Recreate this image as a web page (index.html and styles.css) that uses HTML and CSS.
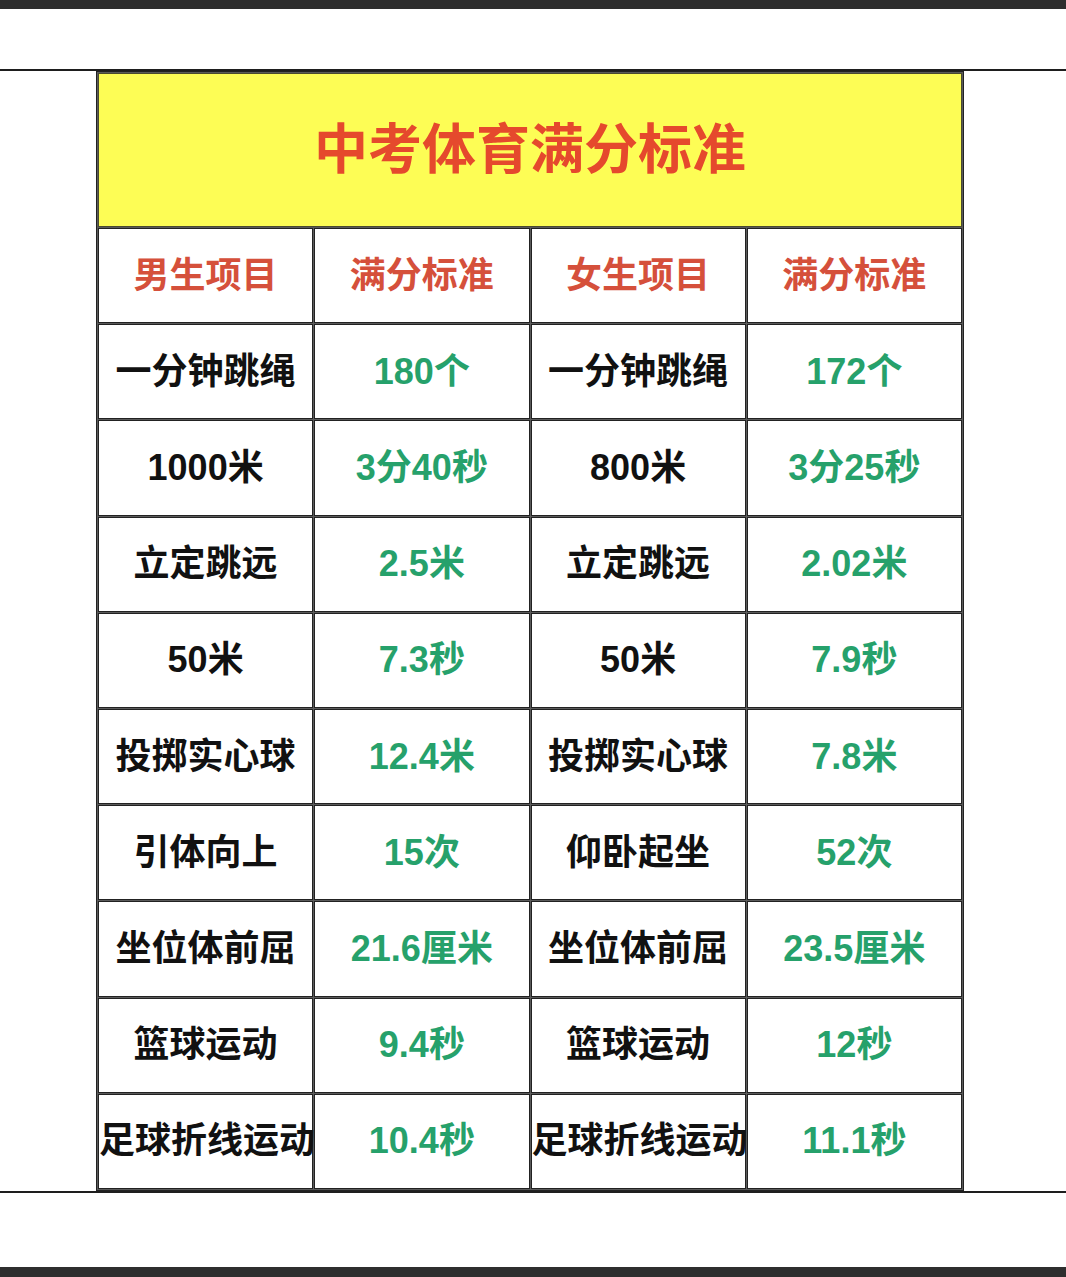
FILE: index.html
```html
<!DOCTYPE html>
<html lang="zh-CN">
<head>
<meta charset="utf-8">
<title>中考体育满分标准</title>
<link rel="stylesheet" href="styles.css">
</head>
<body>
<div class="topbar"></div>
<div class="gap-top"></div>
<div class="frame">
  <table class="score">
    <tr><td class="title" colspan="4">中考体育满分标准</td></tr>
    <tr class="row">
      <td class="head">男生项目</td><td class="head">满分标准</td><td class="head">女生项目</td><td class="head">满分标准</td>
    </tr>
    <tr class="row"><td class="item">一分钟跳绳</td><td class="val">180个</td><td class="item">一分钟跳绳</td><td class="val">172个</td></tr>
    <tr class="row"><td class="item">1000米</td><td class="val">3分40秒</td><td class="item">800米</td><td class="val">3分25秒</td></tr>
    <tr class="row"><td class="item">立定跳远</td><td class="val">2.5米</td><td class="item">立定跳远</td><td class="val">2.02米</td></tr>
    <tr class="row"><td class="item">50米</td><td class="val">7.3秒</td><td class="item">50米</td><td class="val">7.9秒</td></tr>
    <tr class="row"><td class="item">投掷实心球</td><td class="val">12.4米</td><td class="item">投掷实心球</td><td class="val">7.8米</td></tr>
    <tr class="row"><td class="item">引体向上</td><td class="val">15次</td><td class="item">仰卧起坐</td><td class="val">52次</td></tr>
    <tr class="row"><td class="item">坐位体前屈</td><td class="val">21.6厘米</td><td class="item">坐位体前屈</td><td class="val">23.5厘米</td></tr>
    <tr class="row"><td class="item">篮球运动</td><td class="val">9.4秒</td><td class="item">篮球运动</td><td class="val">12秒</td></tr>
    <tr class="row"><td class="item">足球折线运动</td><td class="val">10.4秒</td><td class="item">足球折线运动</td><td class="val">11.1秒</td></tr>
  </table>
</div>
<div class="gap-bottom"></div>
<div class="bottombar"></div>
</body>
</html>
```
FILE: styles.css
```css
html, body {
  margin: 0;
  padding: 0;
  background: #ffffff;
}
body {
  font-family: "Liberation Sans", "Noto Sans CJK SC", sans-serif;
  font-weight: bold;
}
.topbar {
  height: 9px;
  background: #2e2e2e;
}
.gap-top {
  height: 60px;
}
.frame {
  border-top: 2px solid #1e1e1e;
  border-bottom: 2px solid #1e1e1e;
  padding-left: 96px;
}
.score {
  table-layout: fixed;
  width: 868px;
  border-collapse: separate;
  border-spacing: 1px;
  border: 1px solid #222222;
  background: #5a5a5a;
}
.score td {
  border: 1px solid #222222;
  background: #ffffff;
  padding: 0;
  text-align: center;
  vertical-align: middle;
  white-space: nowrap;
  font-size: 36px;
  line-height: 1;
  overflow: visible;
}
.score td.title {
  height: 152px;
  background: #fdfd55;
  border-color: #4a4a30;
  color: #e5492d;
  font-size: 54px;
}
.row td {
  height: 93.2px;
}
.head {
  color: #d5503b;
}
.item {
  color: #111111;
}
.val {
  color: #26a16b;
}
.gap-bottom {
  height: 74px;
}
.bottombar {
  height: 10px;
  background: #2e2e2e;
}
```
